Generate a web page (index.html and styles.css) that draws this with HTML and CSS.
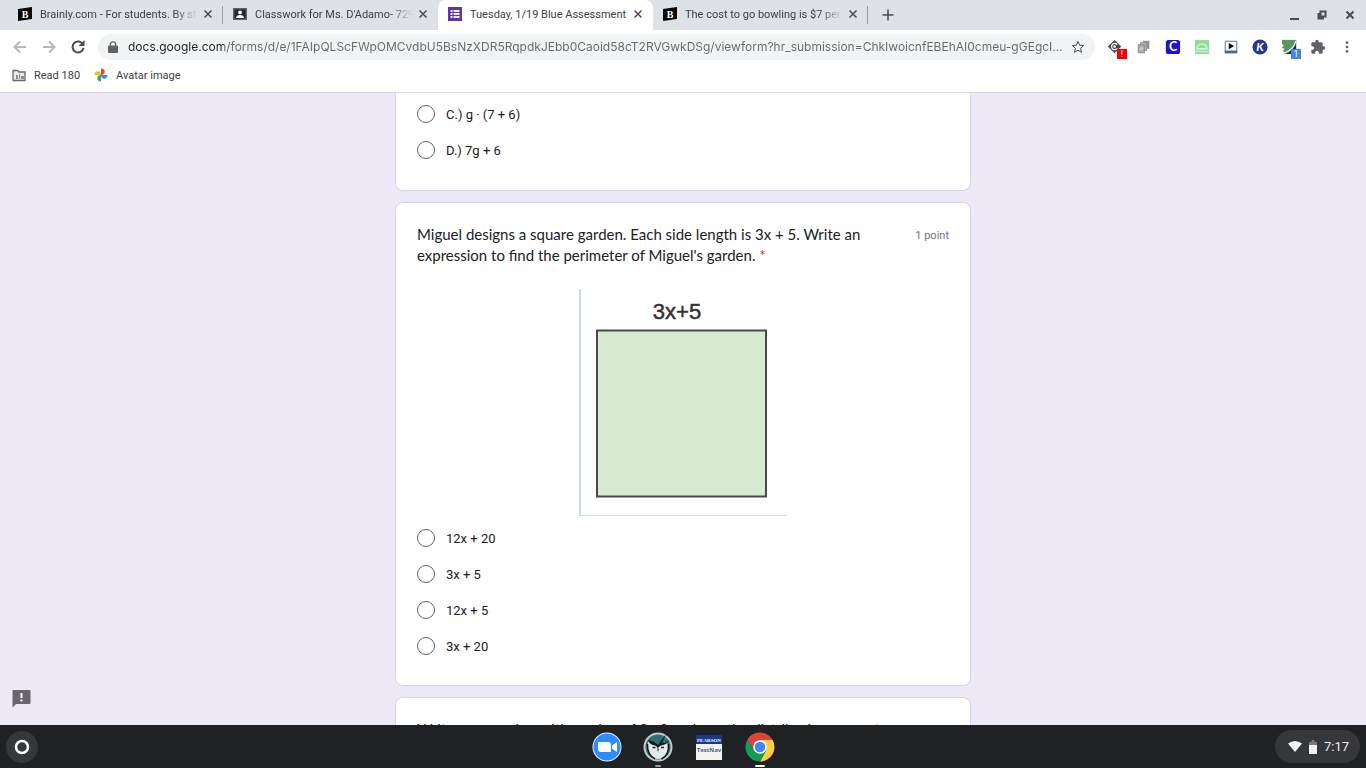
FILE: index.html
```
<!DOCTYPE html>
<html lang="en">
<head>
  <meta charset="UTF-8">
  <title>Tuesday, 1/19 Blue Assessment</title>
  <link rel="stylesheet" href="styles.css">
</head>
<body>
  <!-- Tab strip -->
  <div class="tab-strip">
    <div class="tab">
      <svg class="favicon" viewBox="0 0 14 14"><path d="M0 2L14 0V12L0 14Z" fill="#050505"/><text x="7" y="11" text-anchor="middle" class="brainly-b">B</text></svg>
      <span class="tab-title faded">Brainly.com - For students. By st</span>
      <button class="tab-close" aria-label="Close tab"><svg viewBox="0 0 14 14"><path d="M3.500 3.500l7 7M10.500 3.500l-7 7"/></svg></button>
    </div>
    <div class="tab">
      <svg class="favicon" viewBox="0 0 14 14"><path d="M0 1h14v12H0z" fill="#5c6064"/><path d="M1.500 2.500h11v9h-11z" fill="#25282b"/><circle cx="7" cy="5.500" r="1.900" fill="#fff"/><path d="M3 11c0-4 8-4 8 0z" fill="#fff"/></svg>
      <span class="tab-title faded">Classwork for Ms. D'Adamo- 729</span>
      <button class="tab-close" aria-label="Close tab"><svg viewBox="0 0 14 14"><path d="M3.500 3.500l7 7M10.500 3.500l-7 7"/></svg></button>
    </div>
    <div class="tab active">
      <svg class="favicon" viewBox="0 0 14 14"><path d="M0 0h14v14H0z" fill="#5e35a5"/><path d="M2.500 3h2v2h-2zM2.500 6h2v2h-2zM2.500 9h2v2h-2zM5.500 3h6v2h-6zM5.500 6h6v2h-6zM5.500 9h6v2h-6z" fill="#f0eaf8"/></svg>
      <span class="tab-title">Tuesday, 1/19 Blue Assessment</span>
      <button class="tab-close" aria-label="Close tab"><svg viewBox="0 0 14 14"><path d="M3.500 3.500l7 7M10.500 3.500l-7 7"/></svg></button>
    </div>
    <div class="tab">
      <svg class="favicon" viewBox="0 0 14 14"><path d="M0 2L14 0V12L0 14Z" fill="#050505"/><text x="7" y="11" text-anchor="middle" class="brainly-b">B</text></svg>
      <span class="tab-title faded">The cost to go bowling is $7 per</span>
      <button class="tab-close" aria-label="Close tab"><svg viewBox="0 0 14 14"><path d="M3.500 3.500l7 7M10.500 3.500l-7 7"/></svg></button>
    </div>
    <button class="new-tab" aria-label="New tab"><svg viewBox="0 0 14 14"><path d="M7 1.500v11M1.500 7h11"/></svg></button>
    <div class="window-controls">
      <button aria-label="Minimize"><svg viewBox="0 0 14 14"><path d="M3 11h9" /></svg></button>
      <button aria-label="Restore"><svg viewBox="0 0 14 14"><path d="M5.500 3.500h5v5h-5zM3.500 5v5.500H9"/></svg></button>
      <button aria-label="Close"><svg viewBox="0 0 14 14"><path d="M3.500 3.500l7 7M10.500 3.500l-7 7"/></svg></button>
    </div>
  </div>

  <!-- Toolbar -->
  <div class="toolbar">
    <div class="nav">
      <button class="dim" aria-label="Back"><svg viewBox="0 0 14 14"><path d="M13 7H2M7 1.500L1.500 7 7 12.500"/></svg></button>
      <button class="dim" aria-label="Forward"><svg viewBox="0 0 14 14"><path d="M1 7h11M7 1.500L12.500 7 7 12.500"/></svg></button>
      <button aria-label="Reload"><svg viewBox="0 0 14 14"><path d="M12 4.500A5.500 5.500 0 1 0 12.500 8"/><path d="M13.500 0v6h-6z" class="solid"/></svg></button>
    </div>
    <div class="omnibox">
      <svg class="lock" viewBox="0 0 10 12"><path d="M1 4.500h8q1 0 1 1V11q0 1-1 1H1q-1 0-1-1V5.500q0-1 1-1z" fill="#5f6368"/><path d="M2.500 5V3a2.500 2.200 0 0 1 5 0v2" fill="none" stroke="#5f6368" stroke-width="1.300"/></svg>
      <input class="url" type="text" aria-label="Address" value="docs.google.com/forms/d/e/1FAIpQLScFWpOMCvdbU5BsNzXDR5RqpdkJEbb0Caoid58cT2RVGwkDSg/viewform?hr_submission=ChkIwoicnfEBEhAI0cmeu-gGEgcI…">
      <button class="star" aria-label="Bookmark this tab"><svg viewBox="0 0 14 14"><path d="M7 1.500l1.600 3.700 4 .4-3 2.700.900 4L7 10.200l-3.500 2.100.900-4-3-2.700 4-.4z"/></svg></button>
    </div>
    <div class="extensions">
      <button aria-label="Tag extension"><svg viewBox="0 0 18 18"><path d="M8.500 1l7.500 7.500-7.500 7.500L1 8.500z" fill="#484848"/><path d="M11.500 6.500a3.500 3.500 0 1 0 0 4" fill="none" stroke="#eee" stroke-width="1.500"/><circle cx="8.500" cy="8.500" r="1.500" fill="#eee"/></svg><span class="badge red">!</span></button>
      <button aria-label="Copies extension"><svg viewBox="0 0 18 18"><path d="M8 2h7v9H8z" fill="#909090"/><path d="M5 4h7v9H5z" fill="#b5b5b5" stroke="#888"/><path d="M2.500 6.500h7v9h-7z" fill="#aaa" stroke="#888"/><circle cx="6" cy="11" r="2" fill="#ccc"/></svg></button>
      <button aria-label="Clever extension"><svg viewBox="0 0 18 18"><rect x="1" y="1" width="16" height="16" rx="3" fill="#1b12cf"/><text x="9" y="14" text-anchor="middle" class="ext-c">C</text></svg></button>
      <button aria-label="Desmos extension"><svg viewBox="0 0 18 18"><path d="M1 1h16v16H1z" fill="#8fdc9c"/><path d="M3.500 11a5.500 5.500 0 0 1 11 0z" fill="none" stroke="#d9f8dc" stroke-width="1.500"/><path d="M1 13h16v2H1z" fill="#c0efc5"/></svg></button>
      <button aria-label="Video extension"><svg viewBox="0 0 18 18"><path d="M2.500 2.500h13v13h-13z" fill="#f5f8fb" stroke="#496984"/><path d="M2 13h14v3H2z" fill="#426d8d"/><path d="M6.500 4.500l6 3.500-6 3.500z" fill="#111"/></svg></button>
      <button aria-label="Kami extension"><svg viewBox="0 0 18 18"><circle cx="9" cy="9" r="8.500" fill="#27388b"/><text x="9" y="14" text-anchor="middle" class="ext-k">K</text></svg></button>
      <button aria-label="Reader extension"><svg viewBox="0 0 18 18"><path d="M1 1h16v16H1z" fill="#5a9566"/><path d="M17 1v16H5Q15 13 17 1z" fill="#252b28"/><path d="M17 2Q14 13 2 16.500" fill="none" stroke="#e5f1e7" stroke-width="1.500"/><path d="M0 5l3 2-2 3 3 1-2 3 3 1-4 3H0z" fill="#fff"/></svg><span class="badge blue">1</span></button>
      <button aria-label="Extensions"><svg viewBox="0 0 24 24" class="puzzle"><path d="M20.500 11H19V7c0-1.100-.9-2-2-2h-4V3.500a2.500 2.500 0 0 0-5 0V5H4c-1.100 0-2 .9-2 2v3.800h1.500a2.700 2.700 0 0 1 0 5.400H2V20c0 1.100.9 2 2 2h3.800v-1.500a2.700 2.700 0 0 1 5.400 0V22H17c1.100 0 2-.9 2-2v-4h1.500a2.500 2.500 0 0 0 0-5z"/></svg></button>
      <button aria-label="Menu"><svg viewBox="0 0 18 18"><circle cx="9" cy="4" r="1.500" fill="#5f6368"/><circle cx="9" cy="9" r="1.500" fill="#5f6368"/><circle cx="9" cy="14" r="1.500" fill="#5f6368"/></svg></button>
    </div>
  </div>

  <!-- Bookmarks bar -->
  <nav class="bookmarks">
    <a href="#"><svg viewBox="0 0 14 14"><path d="M1 2.500h4.500L7 4h6v8.500H1z" fill="#e8e8e8" stroke="#66696d" stroke-width="1.300"/><path d="M4 7h2v4H4zM7 6h1v5H7zM9 8h3v3H9z" fill="#8a8d91"/></svg>Read 180</a>
    <a href="#"><svg viewBox="0 0 14 14"><path d="M7 7V0.500c5 0 5 6.500 0 6.500z" fill="#ea4335"/><path d="M7 7h6.500c0 5-6.500 5-6.500 0z" fill="#4285f4"/><path d="M7 7v6.500c-5 0-5-6.500 0-6.500z" fill="#34a853"/><path d="M7 7H.5c0-5 6.500-5 6.500 0z" fill="#fbbc04"/></svg>Avatar image</a>
  </nav>

  <!-- Form -->
  <main class="page">
    <form class="form">
      <div class="card card-first">
        <label class="option"><input type="radio" name="q1">C.) g · (7 + 6)</label>
        <label class="option"><input type="radio" name="q1">D.) 7g + 6</label>
      </div>

      <div class="card">
        <div class="question">
          <h2>Miguel designs a square garden. Each side length is 3x + 5. Write an expression to find the perimeter of Miguel's garden. <span class="required">*</span></h2>
          <span class="points">1 point</span>
        </div>
        <svg class="figure" viewBox="0 0 208 227" role="img" aria-label="Square with side 3x+5">
          <path d="M1 0V227" stroke="#c9dbe5" stroke-width="2"/>
          <path d="M0 226.500H208" stroke="#cfdde6"/>
          <rect x="18" y="41.500" width="169" height="166" fill="#d8ead2" stroke="#454c43" stroke-width="2"/>
          <text x="98" y="30" text-anchor="middle" class="figure-label">3x+5</text>
        </svg>
        <label class="option"><input type="radio" name="q2">12x + 20</label>
        <label class="option"><input type="radio" name="q2">3x + 5</label>
        <label class="option"><input type="radio" name="q2">12x + 5</label>
        <label class="option"><input type="radio" name="q2">3x + 20</label>
      </div>

      <div class="card">
        <div class="question">
          <h2>Write an equation with a value of 8 · 8 and use the distributive property.</h2>
        </div>
      </div>
    </form>
    <button class="feedback" aria-label="Report a problem"><svg viewBox="0 0 18 18"><path d="M1 0h16q1 0 1 1v12q0 1-1 1H3.500L0 17.500V1q0-1 1-1z" fill="#68656f"/><path d="M8 3h2v5H8zM8 9.500h2v2H8z" fill="#fff"/></svg></button>
  </main>

  <!-- Shelf -->
  <footer class="shelf">
    <button class="launcher" aria-label="Launcher"><svg viewBox="0 0 32 32"><circle cx="16" cy="16" r="16" fill="#36373a"/><circle cx="16" cy="16" r="6" fill="none" stroke="#fff" stroke-width="2.500"/></svg></button>
    <div class="apps">
      <button aria-label="Zoom"><svg viewBox="0 0 30 30"><circle cx="15" cy="15" r="14.500" fill="#e4f2ff"/><circle cx="15" cy="15" r="13.500" fill="#2d8cff"/><path d="M6 10h10q3 0 3 3v7H9q-3 0-3-3zM20 13.500l5-3.500v10l-5-3.500z" fill="#fff"/></svg></button>
      <button class="open" aria-label="Secure browser"><svg viewBox="0 0 30 30"><circle cx="15" cy="15" r="14.500" fill="#c3c9c9"/><circle cx="15" cy="15" r="12.500" fill="#2f6f78"/><path d="M5 10q6-1 10 4 4-3 9-4 3 9-3 15-6 4-12 0Q3 19 5 10z" fill="#e6e9e8"/><path d="M5 8q6 1 10 5L23 2l-4 9q5 0 7-3-1 4-6 5-3 0-5 3-2-3-5-3-4-1-5-5z" fill="#10181a"/><path d="M9.500 15.500h3M18 15.500h3" stroke="#222b2d" stroke-width="1.500"/><path d="M14 16.500h2L15 20z" fill="#333"/><path d="M4.500 12Q4 23 12 27M25.500 12q1 11-7 15" fill="none" stroke="#10181a" stroke-width="1.500"/></svg></button>
      <button aria-label="TestNav"><svg viewBox="0 0 30 30"><path d="M2 3h26v25H2z" fill="#f4f3ec"/><path d="M2 3h26v9H2z" fill="#17398d"/><text x="15" y="9.500" text-anchor="middle" class="pearson">PEARSON</text><text x="15" y="20" text-anchor="middle" class="testnav">TestNav</text></svg></button>
      <button class="open current" aria-label="Chrome"><svg viewBox="0 0 30 30"><path d="M15 8h12.700A14.500 14.500 0 0 1 15 29.500L21 18.500z" fill="#ffcd40"/><path d="M2.440 7.750L9 18.500 15 21.500 21 18.500 15 29.500A14.500 14.500 0 0 1 2.440 7.750z" fill="#0f9d58"/><path d="M2.440 7.750A14.500 14.500 0 0 1 27.560 8H15l-6 10.500z" fill="#db4437"/><circle cx="15" cy="15" r="6.800" fill="#fff"/><circle cx="15" cy="15" r="5.300" fill="#4285f4"/></svg></button>
    </div>
    <button class="status">
      <svg class="wifi" viewBox="0 0 14 11"><path d="M0 2.500Q7-2.500 14 2.500L7 11z"/></svg>
      <svg class="battery" viewBox="0 0 8 14"><path d="M2.500 0h3v2H8v3H0V2h2.500z" fill="#77797c"/><path d="M0 5h8v9H0z"/></svg>
      <span>7:17</span>
    </button>
  </footer>
</body>
</html>
```
FILE: styles.css
```
* { box-sizing: border-box; }
body {
  margin: 0;
  height: 100vh;
  display: flex;
  flex-direction: column;
  overflow: hidden;
  font-family: Roboto, "Liberation Sans", sans-serif;
  font-size: 11px;
  color: #3c4043;
  background: #fff;
}
button { padding: 0; border: none; background: none; font: inherit; color: inherit; display: flex; align-items: center; justify-content: center; }
svg { display: block; flex: none; }

/* Tab strip */
.tab-strip { display: flex; align-items: center; height: 30px; padding: 0 9px 0 8px; background: #dee1e6; }
.tab { position: relative; display: flex; align-items: center; width: 215px; height: 30px; padding: 0 8px 2px 10px; border-radius: 8px 8px 0 0; }
.tab:not(.active)::after { content: ""; position: absolute; right: 0; top: 6px; width: 1px; height: 18px; background: #9a9da1; }
.tab:has(+ .active)::after { display: none; }
.tab.active { background: #fff; }
.favicon { width: 14px; height: 14px; margin-right: 8px; }
.tab-title { flex: 1; overflow: hidden; white-space: nowrap; }
.tab-title.faded { -webkit-mask-image: linear-gradient(to right, #000 85%, transparent); mask-image: linear-gradient(to right, #000 85%, transparent); }
.tab-close { width: 14px; margin-left: 3px; }
.tab-close svg, .new-tab svg, .window-controls svg, .nav svg, .star svg { width: 14px; height: 14px; fill: none; stroke: #4a4d51; stroke-width: 2; }
.tab-close svg, .new-tab svg { stroke-width: 1.5; }
.new-tab { width: 14px; height: 28px; margin-left: 13px; }
.window-controls { display: flex; gap: 14px; margin-left: auto; }
.brainly-b { font: bold 10px "Liberation Serif", serif; fill: #fff; }

/* Toolbar */
.toolbar { display: flex; align-items: center; height: 33px; padding: 0 5px 0 13px; }
.nav { display: flex; gap: 15px; }
.nav .dim svg { stroke: #b6b8bb; }
.nav .solid { fill: #4a4d51; stroke: none; }
.omnibox { flex: 1; display: flex; align-items: center; height: 26px; margin: 0 5px 0 13px; padding: 0 10px; border-radius: 13px; background: #f1f3f4; }
.lock { width: 10px; height: 12px; margin-right: 10px; }
.url {
  flex: 1;
  min-width: 0;
  padding: 0;
  border: none;
  outline: none;
  font: 12px Inter, "Liberation Sans", sans-serif;
  /* host name dark, rest of the address grey */
  color: transparent;
  background: linear-gradient(to right, #202124 96px, #65696e 96px);
  -webkit-background-clip: text;
  background-clip: text;
}
.star svg { stroke-width: 1; }
.extensions { display: flex; }
.extensions button { position: relative; width: 29px; height: 26px; }
.extensions svg { width: 16px; height: 16px; }
.puzzle { fill: #5f6368; }
.ext-c { font: bold 14px Lato, sans-serif; fill: #fff; }
.ext-k { font: italic bold 13px Lato, sans-serif; fill: #fff; }
.badge { position: absolute; right: 2px; bottom: 1px; width: 10px; height: 10px; font-size: 9px; line-height: 10px; color: #fff; text-align: center; }
.red { background: #f00000; }
.blue { background: #4285e8; }

/* Bookmarks bar */
.bookmarks { display: flex; gap: 14px; height: 30px; padding: 0 12px 5px; border-bottom: 1px solid #d5d5dd; }
.bookmarks a { display: flex; align-items: center; gap: 8px; color: #3c4043; text-decoration: none; }
.bookmarks svg { width: 14px; height: 14px; }

/* Form */
.page { position: relative; flex: 1; min-height: 0; overflow: hidden; background: #ede9f7; }
.form { display: flex; flex-direction: column; gap: 11px; max-width: 576px; margin: 0 auto; }
.card { padding: 21px; background: #fff; border: 1px solid #d8d6e0; border-radius: 8px; }
.card-first { padding-top: 3px; padding-bottom: 22px; border-top: none; border-radius: 0 0 8px 8px; }
.question { display: flex; justify-content: space-between; gap: 48px; color: #202124; }
.question h2 { margin: 0; font: 15px/21px Lato, "Liberation Sans", sans-serif; }
.required { color: #d93025; }
.points { flex: none; font-size: 11px; line-height: 24px; color: #70757a; }
.figure { width: 208px; height: 227px; margin: 23px auto 4px; }
.figure-label { font: 22px "Liberation Sans", sans-serif; fill: #333; stroke: #333; stroke-width: 0.5px; }
.option { display: flex; align-items: center; height: 36px; font-size: 13px; color: #202124; }
.option input { appearance: none; width: 18px; height: 18px; margin: 0 11px 0 0; border: 1px solid #5f6368; border-radius: 50%; background: #fff; }
.feedback { position: absolute; left: 12px; bottom: 17px; }
.feedback svg { width: 19px; height: 18px; }

/* Shelf */
.shelf { display: grid; grid-template-columns: 1fr auto 1fr; align-items: center; height: 43px; padding: 0 6px; background: #202124; }
.launcher { justify-self: start; }
.launcher svg { width: 32px; height: 32px; }
.apps { display: flex; gap: 21px; }
.apps button { position: relative; }
.apps svg { width: 30px; height: 30px; }
.apps .open::after { content: ""; position: absolute; bottom: -5px; width: 6px; height: 2px; border-radius: 1px; background: #9a9b9d; }
.apps .current::after { width: 10px; background: #fff; }
.pearson { font: bold 5px "Liberation Serif", serif; fill: #fff; }
.testnav { font: bold 6px "Open Sans", sans-serif; fill: #4a5c93; }
.status { justify-self: end; gap: 7px; height: 33px; padding: 0 11px 0 13px; border-radius: 17px; background: #36373a; color: #f1f1f1; font-size: 13px; }
.status svg { fill: #f1f1f1; }
.wifi { width: 14px; height: 11px; }
.battery { width: 8px; height: 14px; }
```
